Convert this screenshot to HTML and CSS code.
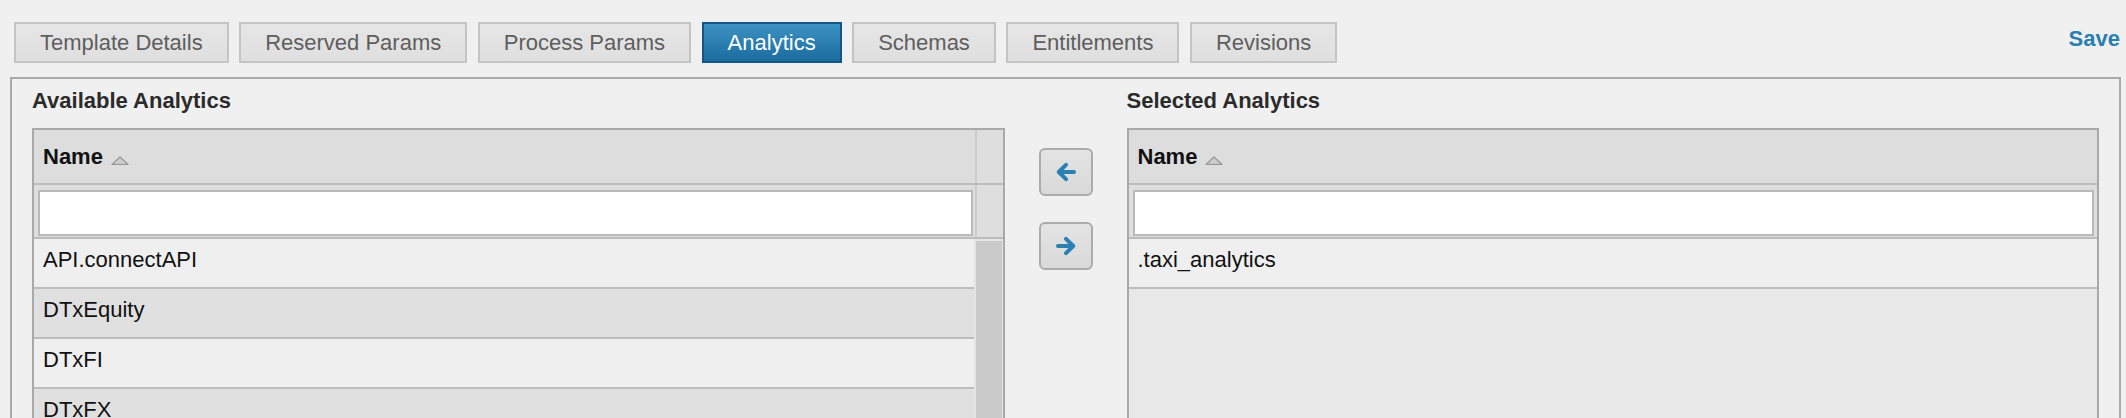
FILE: index.html
```html
<!DOCTYPE html>
<html lang="en">
<head>
  <meta charset="UTF-8">
  <meta name="viewport" content="width=device-width, initial-scale=1.0">
  <title>Template - Analytics</title>
  <link rel="stylesheet" href="styles.css">
</head>
<body>
  <div class="topbar">
    <div class="tabs">
      <div class="tab">Template Details</div>
      <div class="tab">Reserved Params</div>
      <div class="tab">Process Params</div>
      <div class="tab active">Analytics</div>
      <div class="tab">Schemas</div>
      <div class="tab">Entitlements</div>
      <div class="tab">Revisions</div>
    </div>
    <a class="save" href="#">Save</a>
  </div>

  <div class="panel">
    <div class="picker">
      <h3>Available Analytics</h3>
      <div></div>
      <h3>Selected Analytics</h3>

      <!-- available list -->
      <div class="data-table">
        <div class="table-head">
          <div class="head-cell">Name<svg class="sort-icon" width="18" height="9" viewBox="0 0 18 9"><path d="M1 8.5 L9 1 L17 8.5 Z" fill="#cfcfcf" stroke="#9a9a9a" stroke-width="1.4" stroke-linejoin="round"/></svg></div>
          <div class="scroll-cell"></div>
        </div>
        <div class="filter-row">
          <div class="filter-cell"><input type="text" class="filter-input"></div>
          <div class="scroll-cell"></div>
        </div>
        <div class="table-body">
          <div class="rows">
            <div class="row">API.connectAPI</div>
            <div class="row alt">DTxEquity</div>
            <div class="row">DTxFI</div>
            <div class="row alt">DTxFX</div>
          </div>
          <div class="scrollbar"><div class="thumb"></div></div>
        </div>
      </div>

      <div class="move-buttons">
        <button class="move-btn" title="Remove">
          <svg width="20" height="20" viewBox="0 0 20 20"><path d="M18 10 H3.5 M10 2.8 L2.8 10 L10 17.2" fill="none" stroke="#2a80b3" stroke-width="4" stroke-linecap="round" stroke-linejoin="round"/></svg>
        </button>
        <button class="move-btn" title="Add">
          <svg width="20" height="20" viewBox="0 0 20 20"><path d="M2 10 H16.5 M10 2.8 L17.2 10 L10 17.2" fill="none" stroke="#2a80b3" stroke-width="4" stroke-linecap="round" stroke-linejoin="round"/></svg>
        </button>
      </div>

      <!-- selected list -->
      <div class="data-table">
        <div class="table-head">
          <div class="head-cell">Name<svg class="sort-icon" width="18" height="9" viewBox="0 0 18 9"><path d="M1 8.5 L9 1 L17 8.5 Z" fill="#cfcfcf" stroke="#9a9a9a" stroke-width="1.4" stroke-linejoin="round"/></svg></div>
        </div>
        <div class="filter-row">
          <div class="filter-cell wide"><input type="text" class="filter-input"></div>
        </div>
        <div class="table-body">
          <div class="rows">
            <div class="row">.taxi_analytics</div>
          </div>
        </div>
      </div>
    </div>
  </div>
</body>
</html>
```

FILE: styles.css
```css
body {
  margin: 0;
  background-color: #f0f0f0;
  font-family: "Liberation Sans", Arial, Helvetica, sans-serif;
  font-size: 22px;
  color: #111;
}
.topbar {
  display: flex;
  align-items: flex-start;
  padding: 22px 6px 0 14px;
}
.tabs { display: flex; gap: 10.5px; }
.tab {
  height: 41px;
  box-sizing: border-box;
  padding: 0 24px;
  border: 2px solid #c4c4c4;
  background: linear-gradient(#e6e6e6, #dfdfdf);
  color: #5e5e5e;
  line-height: 37px;
  white-space: nowrap;
  cursor: pointer;
}
.tab.active {
  background: linear-gradient(#3c92c3, #1b6c9f);
  border-color: #145785;
  color: #ffffff;
}
.save {
  margin-left: auto;
  margin-top: 4px;
  line-height: 26px;
  font-weight: bold;
  color: #2a7fb1;
  text-decoration: none;
}
.panel {
  margin: 14px 5px 0 10px;
  border: 2px solid #aaaaaa;
  padding: 9px 20px 0;
}
.picker {
  display: grid;
  grid-template-columns: 1fr 122px 1fr;
}
h3 {
  margin: 0 0 14px;
  font-size: 22px;
  line-height: 26px;
  color: #2b2b2b;
}
.data-table {
  border: 2px solid #a9a9a9;
  background: #e8e8e8;
}
.table-head {
  display: flex;
  height: 53px;
  background: #dddddd;
  border-bottom: 2px solid #bdbdbd;
}
.head-cell {
  flex: 1;
  padding-left: 9px;
  line-height: 53px;
  font-weight: bold;
  color: #111;
}
.sort-icon { margin-left: 8px; vertical-align: -1px; }
.scroll-cell {
  width: 26px;
  border-left: 2px solid #cbcbcb;
  background: #dedede;
}
.filter-row {
  display: flex;
  background: #dedede;
  border-bottom: 2px solid #bcbcbc;
}
.filter-cell { flex: 1; padding: 5px 2px 1px 4px; }
.filter-cell.wide { padding-right: 3px; }
.filter-input {
  display: block;
  width: 100%;
  height: 46px;
  box-sizing: border-box;
  border: 2px solid #bababa;
  background: #ffffff;
  margin: 0;
  font: inherit;
}
.table-body { display: flex; min-height: 300px; }
.rows { flex: 1; }
.row {
  padding: 0 9px 6px;
  line-height: 42px;
  background: #efefef;
  border-bottom: 2px solid #bdbdbd;
}
.row.alt { background: #e0e0e0; }
.scrollbar {
  width: 26px;
  padding: 2px 1px 0 0;
  border-left: 2px solid #e4e4e4;
  background: #e4e4e4;
}
.thumb { height: 260px; background: #cacaca; }
.move-buttons {
  display: flex;
  flex-direction: column;
  align-items: center;
  gap: 26px;
  padding-top: 20px;
}
.move-btn {
  width: 54px;
  height: 48px;
  padding: 0;
  border: 2px solid #acacac;
  border-radius: 6px;
  background: linear-gradient(#e4e4e4, #d9d9d9);
  display: flex;
  align-items: center;
  justify-content: center;
  cursor: pointer;
}
```
